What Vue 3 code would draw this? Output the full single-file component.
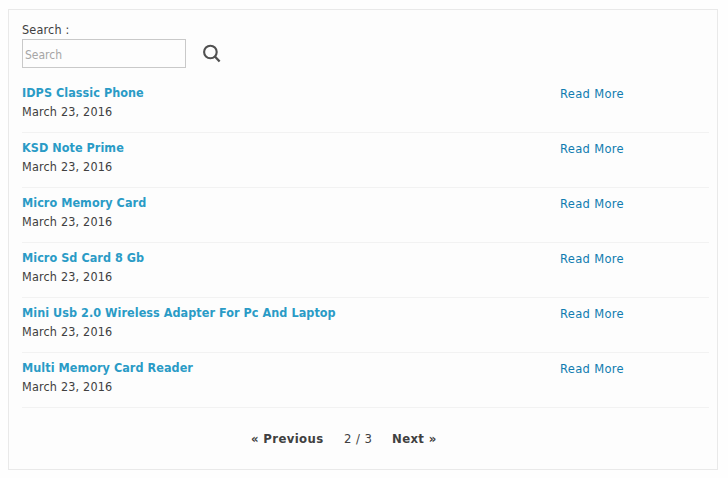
<script setup>
const items = [
  'IDPS Classic Phone',
  'KSD Note Prime',
  'Micro Memory Card',
  'Micro Sd Card 8 Gb',
  'Mini Usb 2.0 Wireless Adapter For Pc And Laptop',
  'Multi Memory Card Reader',
]
</script>

<template>
  <main class="panel">
    <form class="search" @submit.prevent>
      <label class="label" for="query">Search :</label>
      <div class="field">
        <input id="query" class="input" type="text" placeholder="Search" />
        <button class="submit" type="submit" aria-label="Search">
          <svg width="20" height="20" viewBox="0 0 20 20" fill="none" stroke="#505050">
            <circle cx="8.4" cy="8" r="6.3" stroke-width="2.1" />
            <path d="M12.9 12.5L17.6 17.5" stroke-width="2.3" />
          </svg>
        </button>
      </div>
    </form>
    <ul class="list">
      <li v-for="title in items" :key="title" class="row">
        <div class="info">
          <a class="title">{{ title }}</a>
          <span class="date">March 23, 2016</span>
        </div>
        <a class="more">Read More</a>
      </li>
    </ul>
    <nav class="pager">
      <a class="step prev">« Previous</a>
      <span class="count">2 / 3</span>
      <a class="step next">Next »</a>
    </nav>
  </main>
</template>

<style>
body {
  background: #fefefe;
}
</style>

<style scoped>
.panel {
  box-sizing: border-box;
  width: 710px;
  height: 461px;
  margin: 9px 0 0 8px;
  padding: 10px 8px 0 13px;
  border: 1px solid #e9e9e9;
  background: #fdfdfd;
  color: #404040;
  font-family: "DejaVu Sans Condensed", "DejaVu Sans", sans-serif;
  font-size: 12.5px;
  line-height: 19px;
  white-space: nowrap;
}
.label {
  display: block;
  letter-spacing: 0.2px;
}
.field {
  display: flex;
  align-items: center;
}
.input {
  box-sizing: border-box;
  width: 164px;
  height: 29px;
  margin: 0;
  padding: 3px 2px 1px;
  border: 1px solid #c9c9c9;
  border-radius: 0;
  background: #fdfdfd;
  font: inherit;
  font-size: 12px;
  color: #404040;
}
.input::placeholder {
  color: #a6a6a6;
  opacity: 1;
}
.submit {
  display: flex;
  margin: 0 0 0 16px;
  padding: 0;
  border: 0;
  background: none;
}
.list {
  margin: 10px 0 0;
  padding: 0;
  list-style: none;
}
.row {
  display: flex;
  box-sizing: border-box;
  height: 55px;
  padding-top: 5px;
  border-bottom: 1px solid #f2f2f2;
}
.info {
  display: flex;
  flex-direction: column;
  width: 538px;
}
.title {
  color: #2a9bc6;
  font-weight: bold;
  letter-spacing: 0.05px;
}
.date {
  letter-spacing: 0.18px;
}
.more {
  padding-top: 1px;
  color: #117cb0;
  font-size: 12.8px;
  letter-spacing: 0.33px;
}
.pager {
  display: flex;
  padding: 21px 0 0 229px;
  font-size: 13px;
}
.step {
  font-weight: bold;
  letter-spacing: 0.36px;
}
.prev {
  width: 93px;
}
.count {
  width: 48px;
  letter-spacing: 0.4px;
}
</style>
